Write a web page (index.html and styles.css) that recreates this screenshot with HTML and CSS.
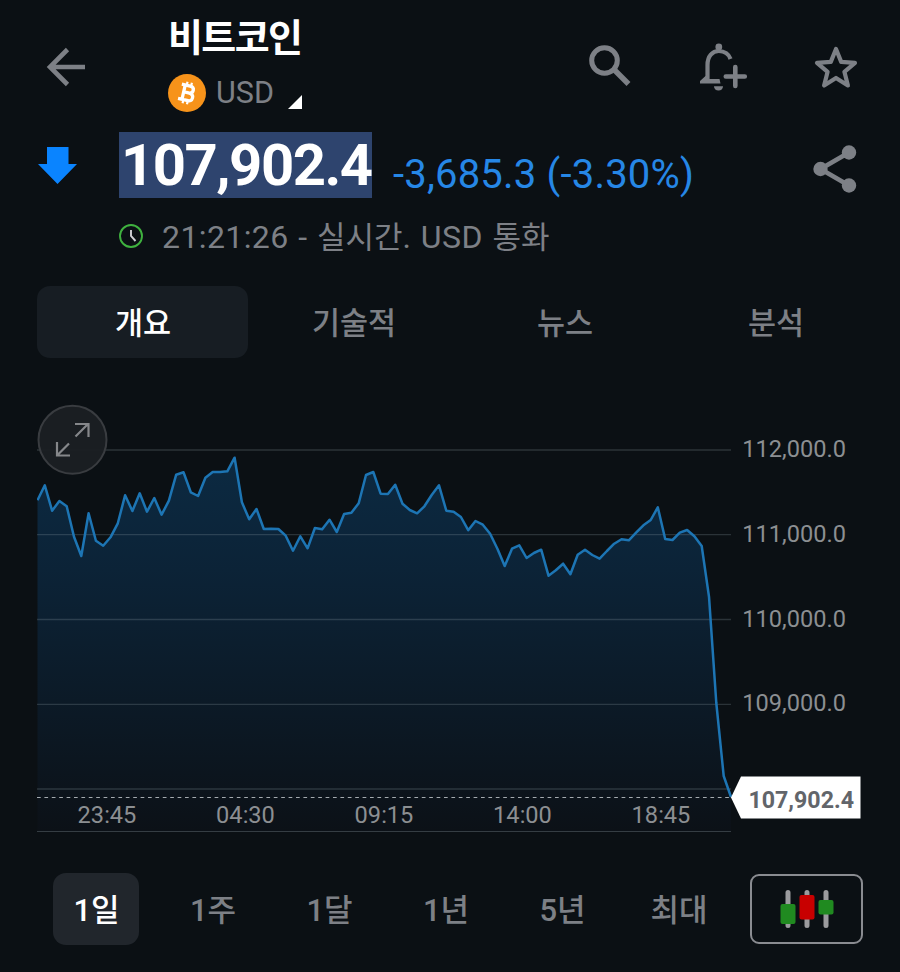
FILE: index.html
```html
<!DOCTYPE html>
<html lang="ko">
<head>
<meta charset="utf-8">
<title>비트코인 USD</title>
<link rel="stylesheet" href="styles.css">
</head>
<body>
<main class="screen">
  <header class="header">
    <svg class="back" width="40" height="40" viewBox="0 0 40 40" fill="none" stroke="currentColor" stroke-width="4.6"><path d="M39 20H5M21.500 2.500L4 20L21.500 37.500"/></svg>
    <div class="instrument">
      <h1 class="title">비트코인</h1>
      <div class="market">
        <svg class="coin" width="38" height="38" viewBox="0 0 38 38"><circle cx="19" cy="19" r="19" fill="#f7931a"/><g transform="rotate(13 19 19)" fill="none" stroke="#fff" stroke-width="3.300"><path d="M15.500 11V27M12 11.500H20.500Q24.500 11.500 24.500 15T20.500 18.600H15M20.500 18.600Q25.500 18.600 25.500 22.600T20.500 26.300H11.500"/><path d="M17 8V12M21.500 8V12M17 26V30M21.500 26V30" stroke-width="2.200"/></g></svg>
        <span class="currency">USD</span>
        <svg class="corner" width="14" height="14" viewBox="0 0 14 14"><path d="M14 0V14H0Z" fill="#fff"/></svg>
      </div>
    </div>
    <nav class="actions">
      <svg class="search" width="44" height="44" viewBox="0 0 44 44" fill="none" stroke="currentColor"><circle cx="16.500" cy="16.500" r="12.800" stroke-width="5"/><path d="M26.500 26L40.500 40" stroke-width="5.500"/></svg>
      <svg class="bell" width="50" height="50" viewBox="0 0 50 50" fill="none" stroke="currentColor" stroke-width="4.200"><path d="M7.500 36V22C7.500 13 12.500 8 18.800 8C24.500 8 29 11.500 30.500 16"/><path d="M0 40.500V38L5.500 33H9V36H19.500L20.500 40.500Z" fill="currentColor" stroke="none"/><circle cx="18.800" cy="4" r="3.400" fill="currentColor" stroke="none"/><path d="M14 43.200H23C23 46 21 47.500 18.500 47.500S14 46 14 43.200Z" fill="currentColor" stroke="none"/><path d="M35.300 24V43M25.800 33.500H44.800" stroke-width="4.600" stroke-linecap="round"/></svg>
      <svg class="star" width="44" height="44" viewBox="0 0 44 44" fill="none" stroke="currentColor" stroke-width="4.200" stroke-linejoin="round"><path d="M22 3L27.200 15.900L41 16.900L30.400 25.800L33.900 39.500L22 32L10.100 39.500L13.600 25.800L3 16.900L16.800 15.900Z"/></svg>
    </nav>
  </header>

  <section class="quote">
    <svg class="down" width="39" height="37" viewBox="0 0 39 37"><path d="M9 0H30.500V17H39L19.500 37L0 17H9Z" fill="#0a84ff"/></svg>
    <span class="price">107,902.4</span>
    <span class="change">-3,685.3 (-3.30%)</span>
    <svg class="share" width="44" height="48" viewBox="0 0 44 48" fill="currentColor" stroke="currentColor"><path d="M36 7.500L7.500 24L36 40.500" fill="none" stroke-width="4.600"/><g stroke="none"><circle cx="36" cy="7.500" r="7.200"/><circle cx="7.500" cy="24" r="7.200"/><circle cx="36" cy="40.500" r="7.200"/></g></svg>
  </section>

  <div class="status">
    <svg width="24" height="24" viewBox="0 0 24 24" fill="none"><circle cx="12" cy="12" r="11" stroke="#3fb23f" stroke-width="1.900"/><path d="M12 6V12L16.500 17" stroke="#d0d0d6" stroke-width="1.900"/></svg>
    <span class="status-text"><span class="latin">21:21:26 - </span>실시간<span class="latin">. USD </span>통화</span>
  </div>

  <nav class="tabs">
    <span class="tab tab-active">개요</span>
    <span class="tab">기술적</span>
    <span class="tab">뉴스</span>
    <span class="tab">분석</span>
  </nav>

  <section class="chart">
    <svg class="plot" width="863" height="436" viewBox="37 400 863 436">
      <defs><linearGradient id="area" gradientUnits="userSpaceOnUse" x1="0" y1="457" x2="0" y2="831"><stop offset="0" stop-color="#0c2a42"/><stop offset=".3" stop-color="#0c2337"/><stop offset="1" stop-color="#0c1117"/></linearGradient></defs>
      <path fill="url(#area)" d="M37.500 831V500.300L44.800 485.300L52.100 510.700L59.400 501L66.700 506.300L74 536.700L81.300 556L88.600 513.300L95.900 540.700L103.200 545.700L110.500 537.300L117.800 523.300L125.100 495.300L132.400 511L139.700 493.300L147 511.700L154.300 498L161.600 514.700L168.900 500.700L176.200 474.700L183.500 472.300L190.800 492.300L198.100 496L205.400 477.700L212.700 472L220 472L227.300 471.300L234.600 457.700L241.900 502.300L249.200 519.300L256.500 509L263.800 529L271.100 528.700L278.400 529L285.700 535.700L293 550.700L300.300 536.300L307.600 548.300L314.900 528L322.200 529.300L329.500 519.700L336.800 532L344.100 514L351.400 512.700L358.700 503.300L366 475L373.300 472L380.600 493.700L387.900 494L395.200 484.700L402.500 503.700L409.800 510L417.100 513.300L424.400 506.300L431.700 495L439 485.300L446.300 510.700L453.600 511.700L460.900 517L468.200 530.200L475.500 521L482.800 524.700L490.100 533.700L497.400 548.700L504.700 566L512 548.700L519.300 545.300L526.600 558L533.900 553L541.200 549.700L548.500 575.700L555.800 570.300L563.100 563.700L570.400 574.300L577.700 554.700L585 549.700L592.300 555L599.600 558.700L606.900 551L614.200 543.700L621.500 539.300L628.800 540.300L636.100 532.700L643.400 525.300L650.700 520L657.800 507.300L665.200 539L672.500 540L679.800 532.700L687.100 530L694.400 536.300L701.700 546L709 596.700L716.300 703L723.700 776L731 797V831Z"/>
      <path class="grid" d="M37 450H731M37 534.700H731M37 619.500H731M37 704.300H731M37 789H731"/>
      <path class="axis" d="M37 831.500H731"/>
      <path class="current" d="M37 797.500H731"/>
      <path class="line" d="M37.500 500.300L44.800 485.300L52.100 510.700L59.400 501L66.700 506.300L74 536.700L81.300 556L88.600 513.300L95.900 540.700L103.200 545.700L110.500 537.300L117.800 523.300L125.100 495.300L132.400 511L139.700 493.300L147 511.700L154.300 498L161.600 514.700L168.900 500.700L176.200 474.700L183.500 472.300L190.800 492.300L198.100 496L205.400 477.700L212.700 472L220 472L227.300 471.300L234.600 457.700L241.900 502.300L249.200 519.300L256.500 509L263.800 529L271.100 528.700L278.400 529L285.700 535.700L293 550.700L300.300 536.300L307.600 548.300L314.900 528L322.200 529.300L329.500 519.700L336.800 532L344.100 514L351.400 512.700L358.700 503.300L366 475L373.300 472L380.600 493.700L387.900 494L395.200 484.700L402.500 503.700L409.800 510L417.100 513.300L424.400 506.300L431.700 495L439 485.300L446.300 510.700L453.600 511.700L460.900 517L468.200 530.200L475.500 521L482.800 524.700L490.100 533.700L497.400 548.700L504.700 566L512 548.700L519.300 545.300L526.600 558L533.900 553L541.200 549.700L548.500 575.700L555.800 570.300L563.100 563.700L570.400 574.300L577.700 554.700L585 549.700L592.300 555L599.600 558.700L606.900 551L614.200 543.700L621.500 539.300L628.800 540.300L636.100 532.700L643.400 525.300L650.700 520L657.800 507.300L665.200 539L672.500 540L679.800 532.700L687.100 530L694.400 536.300L701.700 546L709 596.700L716.300 703L723.700 776L731 797"/>
      <g class="tick" text-anchor="end"><text x="846" y="457">112,000.0</text><text x="846" y="542">111,000.0</text><text x="846" y="627">110,000.0</text><text x="846" y="711">109,000.0</text></g>
      <g class="tick" text-anchor="middle"><text x="107" y="823">23:45</text><text x="245.500" y="823">04:30</text><text x="384" y="823">09:15</text><text x="522.500" y="823">14:00</text><text x="661" y="823">18:45</text></g>
      <path d="M731 797.500L741 776.500H860.500V818.500H741Z" fill="#fff"/>
      <text class="tag" x="854" y="808" text-anchor="end">107,902.4</text>
      <circle cx="72.500" cy="439.800" r="34" fill="#1b1f23" fill-opacity=".96" stroke="#393c40" stroke-width="2"/>
      <path d="M75.500 436.500L88 424M75 424H88.500V437M69 443.500L57.500 455M57 442V455.500H70" fill="none" stroke="#85878a" stroke-width="2.200"/>
    </svg>
  </section>

  <nav class="ranges">
    <span class="range range-active">1일</span>
    <span class="range">1주</span>
    <span class="range">1달</span>
    <span class="range">1년</span>
    <span class="range">5년</span>
    <span class="range">최대</span>
    <span class="candles">
      <svg width="54" height="40" viewBox="0 0 54 40"><path d="M8 3.500V36.500M27 3.500V36.500M46 3.500V36.500" stroke="#9b9b9e" stroke-width="5" stroke-linecap="round"/><rect x=".5" y="15" width="15" height="20" rx="2" fill="#208a20"/><rect x="19.500" y="6" width="15" height="24.500" rx="2" fill="#c80000"/><rect x="38.500" y="11" width="15" height="14.500" rx="2" fill="#208a20"/></svg>
    </span>
  </nav>
</main>
</body>
</html>
```
FILE: styles.css
```css
* { box-sizing: border-box; }
body {
  margin: 0;
  background: #0b1014;
  color: #7d8086;
  font-family: Roboto, "Noto Sans CJK KR", sans-serif;
}
svg { display: block; flex: none; }
.screen { width: 900px; height: 972px; overflow: hidden; }

.header { display: flex; height: 124px; padding-left: 46px; }
.back { margin-top: 47px; }
.instrument { width: 420px; padding: 14px 0 0 82px; }
.title {
  margin: 0;
  color: #fff;
  font-size: 38px;
  font-weight: 700;
  line-height: 49px;
  letter-spacing: -1.6px;
  white-space: nowrap;
}
.market { display: flex; align-items: center; height: 38px; margin-top: 11px; }
.currency { width: 72px; margin-left: 10px; font-size: 30.5px; line-height: 38px; }
.corner { align-self: flex-end; margin-bottom: 3px; }
.actions { display: flex; }
.search { margin: 44px 0 0 82px; }
.bell { margin: 43px 0 0 68px; }
.star { margin: 46px 0 0 64px; }

.quote { display: flex; height: 74px; padding: 8px 0 0 38px; white-space: nowrap; }
.down { margin-top: 15px; }
.price {
  width: 253px;
  height: 66px;
  margin-left: 42px;
  padding-left: 2px;
  background: #2e446e;
  color: #fff;
  font-size: 58px;
  font-weight: 700;
  line-height: 66px;
  letter-spacing: -1.5px;
}
.change { width: 420px; margin: 18px 0 0 21px; color: #2687e6; font-size: 40px; line-height: 50px; letter-spacing: .2px; }
.share { margin-top: 13px; }

.status { display: flex; align-items: center; height: 76px; padding-left: 119px; }
.status-text { margin: 2px 0 0 19px; font-size: 31px; line-height: 40px; white-space: pre; }
.latin { font-size: 32px; letter-spacing: .4px; word-spacing: 1.2px; }

.tabs {
  display: grid;
  grid-template-columns: repeat(4, 211px);
  height: 72px;
  margin: 12px 0 0 37px;
  font-size: 30.5px;
  font-weight: 500;
}
.tab { display: flex; align-items: center; justify-content: center; padding: 0 0 3px 1px; border-radius: 13px; }
.tab-active { background: #171d23; color: #fff; }

.chart { height: 436px; margin: 42px 0 0 37px; }
.grid { fill: none; stroke: #94a1ad; stroke-opacity: .24; stroke-width: 1.3; }
.axis { fill: none; stroke: #353d43; stroke-width: 1.2; }
.current { fill: none; stroke: #a5abb0; stroke-width: 1.2; stroke-dasharray: 3.7 3.7; }
.line { fill: none; stroke: #1d75b4; stroke-width: 2.5; stroke-linejoin: round; }
.tick { fill: #8c8f92; font-size: 23.6px; }
.tag { fill: #62656a; font-size: 23.2px; font-weight: 700; }

.ranges {
  display: grid;
  grid-template-columns: 86px repeat(5, 86px) 113px;
  column-gap: 30.5px;
  height: 72px;
  margin: 37px 0 0 53px;
  font-size: 31px;
  font-weight: 500;
}
.range { display: flex; align-items: center; justify-content: center; padding: 0 0 4px 1px; border-radius: 13px; }
.range-active { background: #21262c; color: #fff; }
.candles {
  display: flex;
  align-items: center;
  justify-content: center;
  width: 113px;
  height: 70px;
  margin: 1px 0 0 -2px;
  border: 2px solid #8a8c91;
  border-radius: 9px;
}
```
